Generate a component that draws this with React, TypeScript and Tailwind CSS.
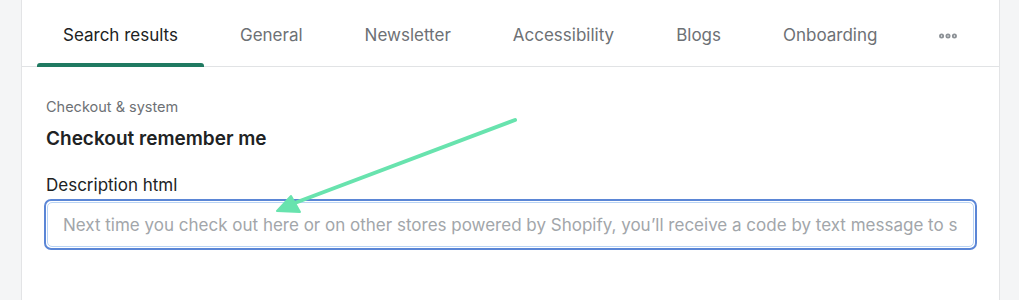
import { MoreHorizontal } from 'lucide-react'

const TABS = ['Search results', 'General', 'Newsletter', 'Accessibility', 'Blogs', 'Onboarding']

export default function App() {
  return (
    <div
      className="relative flex h-[300px] w-[1019px] overflow-hidden bg-[#f4f5f6]"
      style={{ fontFamily: 'Inter, "Helvetica Neue", Arial, sans-serif' }}
    >
      <div className="ml-[21px] flex h-full w-[979px] flex-col border-x border-[#e3e4e6] bg-white">
        {/* Tabs */}
        <div className="flex h-[67px] items-stretch gap-[10px] border-b border-[#e1e3e5] pl-[15px]">
          {TABS.map((tab, i) => (
            <div key={tab} className="relative flex items-center px-[26px] pt-[6px]">
              <span
                className={
                  i === 0
                    ? 'text-[17px] text-[#202223]'
                    : 'text-[17px] text-[#6d7175]'
                }
              >
                {tab}
              </span>
              {i === 0 && (
                <span className="absolute bottom-[-1px] left-0 right-0 h-[4px] rounded-t-[3px] bg-[#1f7a61]" />
              )}
            </div>
          ))}
          <div className="flex items-center pl-[24px] pt-[6px]">
            <MoreHorizontal className="h-[22px] w-[22px] text-[#8c9196]" strokeWidth={3.5} />
          </div>
        </div>

        {/* Content */}
        <div className="flex flex-col px-[24px] pt-[31px]">
          <p className="text-[14.5px] leading-[18px] text-[#6d7175]">Checkout &amp; system</p>
          <h2 className="mt-[11px] text-[19px] font-semibold leading-[24px] text-[#202223]">
            Checkout remember me
          </h2>
          <label className="mt-[23px] text-[17px] leading-[22px] text-[#202223]">Description html</label>
          <div className="mx-[-2px] mt-[3px] rounded-[7px] border-2 border-[#5b86d6] p-[1px]">
            <div className="flex h-[45px] items-center rounded-[5px] border border-[#b9d4f5] px-[15px] pt-[2px]">
              <div className="flex-1 overflow-hidden">
                <span className="whitespace-nowrap text-[17px] text-[#a2a6aa]">
                  Next time you check out here or on other stores powered by Shopify, you’ll receive a code by text message to securely log in
                </span>
              </div>
            </div>
          </div>
        </div>
      </div>

      {/* Annotation arrow */}
      <svg className="pointer-events-none absolute left-0 top-0" width="1019" height="300" viewBox="0 0 1019 300">
        <line x1="515" y1="120" x2="292" y2="204" stroke="#68e3ae" strokeWidth="4" strokeLinecap="round" />
        <polygon points="277,211 291,196 300,212" fill="#68e3ae" stroke="#68e3ae" strokeWidth="2" strokeLinejoin="round" />
      </svg>
    </div>
  )
}
